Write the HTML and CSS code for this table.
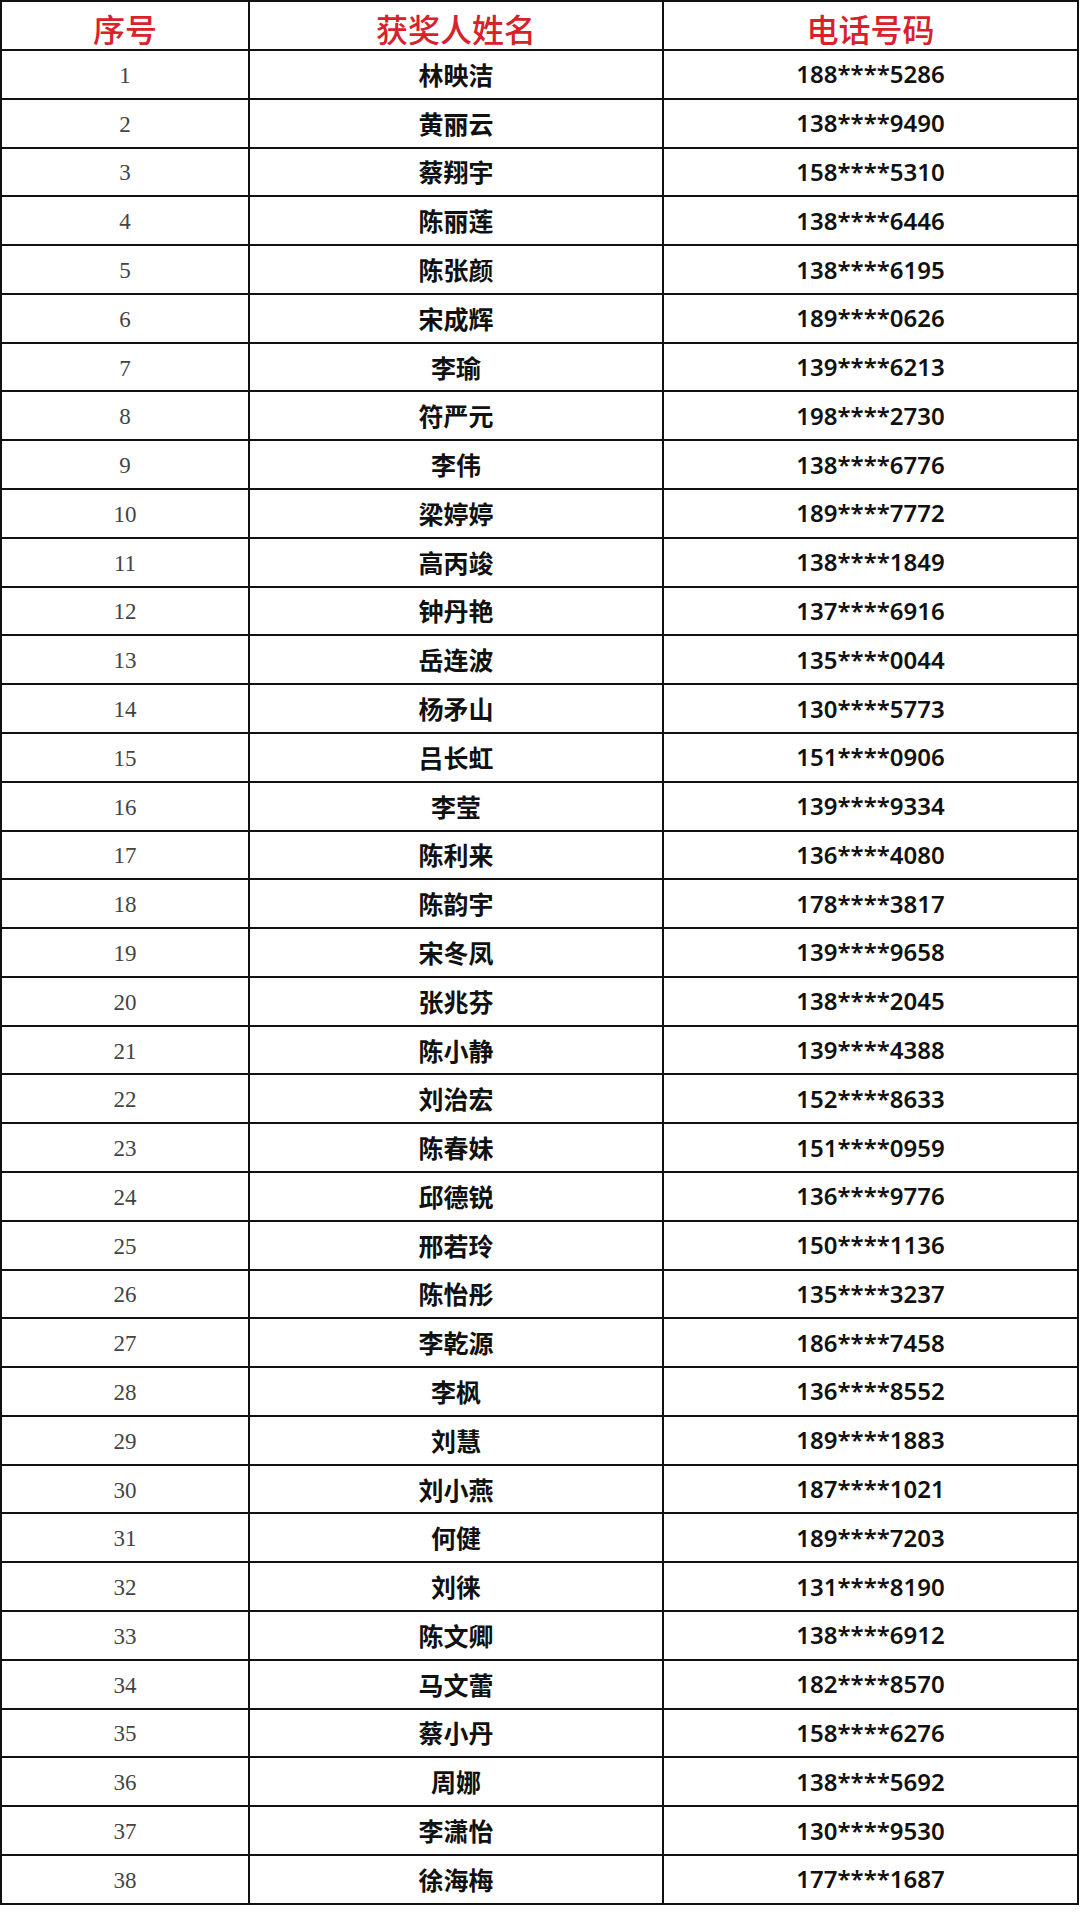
FILE: index.html
```html
<!DOCTYPE html>
<html lang="zh-CN">
<head>
<meta charset="utf-8">
<title>获奖名单</title>
<link rel="stylesheet" href="styles.css">
</head>
<body>
<div class="sheet">
  <div class="cell head">序号</div><div class="cell head">获奖人姓名</div><div class="cell head">电话号码</div>
  <div class="cell no">1</div><div class="cell name">林映洁</div><div class="cell tel">188****5286</div>
  <div class="cell no">2</div><div class="cell name">黄丽云</div><div class="cell tel">138****9490</div>
  <div class="cell no">3</div><div class="cell name">蔡翔宇</div><div class="cell tel">158****5310</div>
  <div class="cell no">4</div><div class="cell name">陈丽莲</div><div class="cell tel">138****6446</div>
  <div class="cell no">5</div><div class="cell name">陈张颜</div><div class="cell tel">138****6195</div>
  <div class="cell no">6</div><div class="cell name">宋成辉</div><div class="cell tel">189****0626</div>
  <div class="cell no">7</div><div class="cell name">李瑜</div><div class="cell tel">139****6213</div>
  <div class="cell no">8</div><div class="cell name">符严元</div><div class="cell tel">198****2730</div>
  <div class="cell no">9</div><div class="cell name">李伟</div><div class="cell tel">138****6776</div>
  <div class="cell no">10</div><div class="cell name">梁婷婷</div><div class="cell tel">189****7772</div>
  <div class="cell no">11</div><div class="cell name">高丙竣</div><div class="cell tel">138****1849</div>
  <div class="cell no">12</div><div class="cell name">钟丹艳</div><div class="cell tel">137****6916</div>
  <div class="cell no">13</div><div class="cell name">岳连波</div><div class="cell tel">135****0044</div>
  <div class="cell no">14</div><div class="cell name">杨矛山</div><div class="cell tel">130****5773</div>
  <div class="cell no">15</div><div class="cell name">吕长虹</div><div class="cell tel">151****0906</div>
  <div class="cell no">16</div><div class="cell name">李莹</div><div class="cell tel">139****9334</div>
  <div class="cell no">17</div><div class="cell name">陈利来</div><div class="cell tel">136****4080</div>
  <div class="cell no">18</div><div class="cell name">陈韵宇</div><div class="cell tel">178****3817</div>
  <div class="cell no">19</div><div class="cell name">宋冬凤</div><div class="cell tel">139****9658</div>
  <div class="cell no">20</div><div class="cell name">张兆芬</div><div class="cell tel">138****2045</div>
  <div class="cell no">21</div><div class="cell name">陈小静</div><div class="cell tel">139****4388</div>
  <div class="cell no">22</div><div class="cell name">刘治宏</div><div class="cell tel">152****8633</div>
  <div class="cell no">23</div><div class="cell name">陈春妹</div><div class="cell tel">151****0959</div>
  <div class="cell no">24</div><div class="cell name">邱德锐</div><div class="cell tel">136****9776</div>
  <div class="cell no">25</div><div class="cell name">邢若玲</div><div class="cell tel">150****1136</div>
  <div class="cell no">26</div><div class="cell name">陈怡彤</div><div class="cell tel">135****3237</div>
  <div class="cell no">27</div><div class="cell name">李乾源</div><div class="cell tel">186****7458</div>
  <div class="cell no">28</div><div class="cell name">李枫</div><div class="cell tel">136****8552</div>
  <div class="cell no">29</div><div class="cell name">刘慧</div><div class="cell tel">189****1883</div>
  <div class="cell no">30</div><div class="cell name">刘小燕</div><div class="cell tel">187****1021</div>
  <div class="cell no">31</div><div class="cell name">何健</div><div class="cell tel">189****7203</div>
  <div class="cell no">32</div><div class="cell name">刘徕</div><div class="cell tel">131****8190</div>
  <div class="cell no">33</div><div class="cell name">陈文卿</div><div class="cell tel">138****6912</div>
  <div class="cell no">34</div><div class="cell name">马文蕾</div><div class="cell tel">182****8570</div>
  <div class="cell no">35</div><div class="cell name">蔡小丹</div><div class="cell tel">158****6276</div>
  <div class="cell no">36</div><div class="cell name">周娜</div><div class="cell tel">138****5692</div>
  <div class="cell no">37</div><div class="cell name">李潇怡</div><div class="cell tel">130****9530</div>
  <div class="cell no">38</div><div class="cell name">徐海梅</div><div class="cell tel">177****1687</div>
</div>
</body>
</html>
```

FILE: styles.css
```css
html, body {
  margin: 0;
  padding: 0;
  background: #ffffff;
}

body {
  width: 1080px;
  height: 1920px;
  overflow: hidden;
}

.sheet {
  display: grid;
  grid-template-columns: 246px 412px 413px;
  grid-template-rows: 47px repeat(38, 46.79px);
  gap: 2px;
  padding: 2px;
  width: fit-content;
  background: #111111;
}

.cell {
  background: #ffffff;
  display: flex;
  align-items: center;
  justify-content: center;
  line-height: 1;
  white-space: nowrap;
}

.head {
  color: #d8212b;
  font-family: "Noto Sans CJK SC", sans-serif;
  font-size: 32px;
  font-weight: 500;
  padding-top: 5px;
}

.no {
  color: #444444;
  font-family: "Liberation Serif", serif;
  font-size: 23px;
  padding-top: 2px;
}

.name {
  color: #111111;
  font-family: "Noto Sans CJK SC", sans-serif;
  font-size: 25px;
  font-weight: 700;
}

.tel {
  color: #111111;
  font-family: "Noto Sans", "Open Sans", sans-serif;
  font-size: 24px;
  font-weight: 600;
}
```
